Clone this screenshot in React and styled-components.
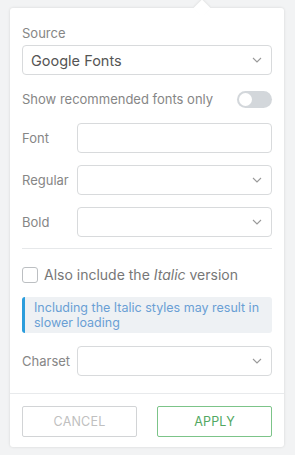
import styled, { createGlobalStyle } from "styled-components";

const Global = createGlobalStyle`
  html, body {
    margin: 0;
    padding: 0;
    background: #f2f3f4;
    font-family: Inter, "Noto Sans", sans-serif;
  }
  * { box-sizing: border-box; }
`

const Page = styled.div`
  width: 295px;
  height: 455px;
  padding: 8px 11px 8px 10px;
`

const Card = styled.div`
  position: relative;
  background: #fff;
  border-radius: 3px;
  box-shadow: 0 0 3px rgba(0, 0, 0, 0.12);
  display: flex;
  flex-direction: column;
  height: 439px;

  &::before {
    content: "";
    position: absolute;
    top: -6px;
    left: 186px;
    width: 12px;
    height: 12px;
    background: #fff;
    transform: rotate(45deg);
    box-shadow: -1px -1px 2px rgba(0, 0, 0, 0.06);
  }
`

const Body = styled.div`
  position: relative;
  padding: 16px 12px 0 12px;
  display: flex;
  flex-direction: column;
  flex: 1;
`

const Label = styled.div`
  font-size: 13px;
  color: #868686;
  line-height: 18px;
  margin-bottom: 3px;
`

const Box = styled.div`
  height: 30px;
  border: 1px solid #d8dadc;
  border-radius: 4px;
  display: flex;
  align-items: center;
  justify-content: space-between;
  padding: 0 9px 0 8px;
  font-size: 14.5px;
  color: #555;
  background: #fff;
  flex: 1;
`

const ToggleRow = styled.div`
  display: flex;
  align-items: center;
  justify-content: space-between;
  margin-top: 15px;
  font-size: 13px;
  color: #868686;
  height: 18px;
`

const Toggle = styled.div`
  width: 35px;
  height: 17px;
  border-radius: 9px;
  background: #d3d7db;
  position: relative;

  &::after {
    content: "";
    position: absolute;
    left: 2px;
    top: 2px;
    width: 13px;
    height: 13px;
    border-radius: 50%;
    background: #fff;
  }
`

const Row = styled.div`
  display: flex;
  align-items: center;
  margin-top: ${p => p.$top}px;
`

const RowLabel = styled.div`
  width: 55px;
  font-size: 13px;
  color: #868686;
`

const Divider = styled.div`
  height: 1px;
  background: #e6e8ea;
  margin-top: 11px;
`

const CheckRow = styled.div`
  display: flex;
  align-items: center;
  margin-top: 17px;
  font-size: 14px;
  color: #777;
  gap: 6px;
`

const Check = styled.div`
  width: 16px;
  height: 16px;
  border: 1px solid #bcbfc2;
  border-radius: 3px;
`

const Info = styled.div`
  margin-top: 14px;
  background: #eef1f4;
  border-left: 3px solid #2b9ddc;
  border-radius: 3px;
  padding: 3px 8px 3px 9px;
  font-size: 12.5px;
  line-height: 15px;
  color: #6a9fd4;
`

const Footer = styled.div`
  border-top: 1px solid #e8eaec;
  padding: 12px 12px 10px 12px;
  display: flex;
  justify-content: space-between;
  margin-top: 17px;
`

const Button = styled.div`
  width: 115px;
  height: 31px;
  border: 1px solid ${p => p.$primary ? "#7cc489" : "#d2d4d6"};
  border-radius: 2px;
  display: flex;
  align-items: center;
  justify-content: center;
  font-size: 12.5px;
  letter-spacing: 0.2px;
  color: ${p => p.$primary ? "#52a862" : "#c0c0c0"};
`

const Chevron = () => (
  <svg width="10" height="6" viewBox="0 0 10 6" fill="none">
    <path d="M1 1l4 4 4-4" stroke="#999" strokeWidth="1.1" />
  </svg>
)

export default function App() {
  return (
    <>
      <Global />
      <Page>
        <Card>
          <Body>
            <Label>Source</Label>
            <Row $top={0}>
              <Box>Google Fonts<Chevron /></Box>
            </Row>
            <ToggleRow>
              Show recommended fonts only
              <Toggle />
            </ToggleRow>
            <Row $top={15}>
              <RowLabel>Font</RowLabel>
              <Box />
            </Row>
            <Row $top={12}>
              <RowLabel>Regular</RowLabel>
              <Box><span /><Chevron /></Box>
            </Row>
            <Row $top={12}>
              <RowLabel>Bold</RowLabel>
              <Box><span /><Chevron /></Box>
            </Row>
            <Divider />
            <CheckRow>
              <Check />
              <span>Also include the <i>Italic</i> version</span>
            </CheckRow>
            <Info>Including the Italic styles may result in slower loading</Info>
            <Row $top={13}>
              <RowLabel>Charset</RowLabel>
              <Box><span /><Chevron /></Box>
            </Row>
          </Body>
          <Footer>
            <Button>CANCEL</Button>
            <Button $primary>APPLY</Button>
          </Footer>
        </Card>
      </Page>
    </>
  )
}
